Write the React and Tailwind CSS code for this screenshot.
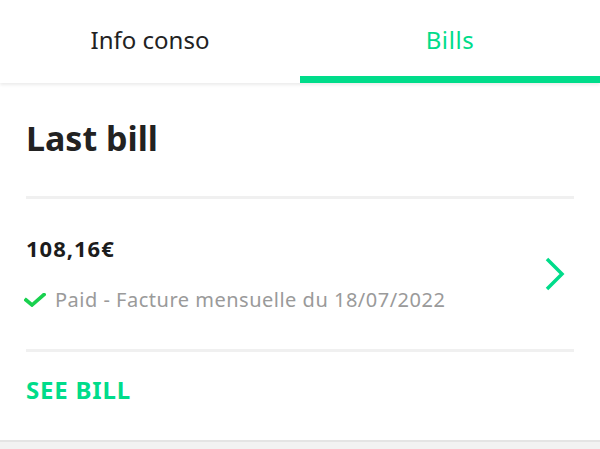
export default function App() {
  return (
    <div
      className="w-[600px] h-[449px] bg-[#f2f2f2] overflow-hidden"
      style={{ fontFamily: '"Noto Sans", "Open Sans", sans-serif' }}
    >
      <div className="flex h-[83px] bg-white shadow-[0_2px_3px_rgba(0,0,0,0.08)] relative z-10">
        <button className="flex-1 flex items-center justify-center text-[24px] text-[#222] pb-1">
          Info conso
        </button>
        <button className="flex-1 flex items-center justify-center text-[24px] tracking-[0.6px] text-[#00dc8a] border-b-[7px] border-[#00dc8a] pt-[3px]">
          Bills
        </button>
      </div>

      <div className="bg-white h-[359px] border-b-2 border-[#e4e4e4] px-[26px]">
        <h1 className="pt-[35px] pb-[38px] text-[34px] leading-[40px] font-bold text-[#222]">
          Last bill
        </h1>
        <div className="h-[3px] bg-[#f0f0f0]" />

        <div className="flex items-center justify-between pt-[36px] pb-[37px]">
          <div>
            <div className="text-[22px] leading-[26px] font-bold tracking-[1px] text-[#1c1c1c]">
              108,16€
            </div>
            <div className="flex items-center gap-[9px] mt-[27px]">
              <svg width="22" height="14" viewBox="0 0 22 14" className="-ml-[2px]">
                <path
                  d="M2 7 L8 12 L20 1.5"
                  fill="none"
                  stroke="#19d14f"
                  strokeWidth="3.6"
                  strokeLinecap="square"
                />
              </svg>
              <span className="text-[20px] leading-[24px] tracking-[0.5px] text-[#9a9a9a]">
                Paid - Facture mensuelle du 18/07/2022
              </span>
            </div>
          </div>
          <svg width="22" height="34" viewBox="0 0 22 34" className="mr-[8px]">
            <path
              d="M3 2 L18 17 L3 32"
              fill="none"
              stroke="#00dc8a"
              strokeWidth="3.5"
            />
          </svg>
        </div>

        <div className="h-[3px] bg-[#f0f0f0]" />
        <div className="pt-[24px] text-[24px] leading-[28px] font-bold tracking-[0.8px] text-[#00dc8a]">
          SEE BILL
        </div>
      </div>
    </div>
  );
}
